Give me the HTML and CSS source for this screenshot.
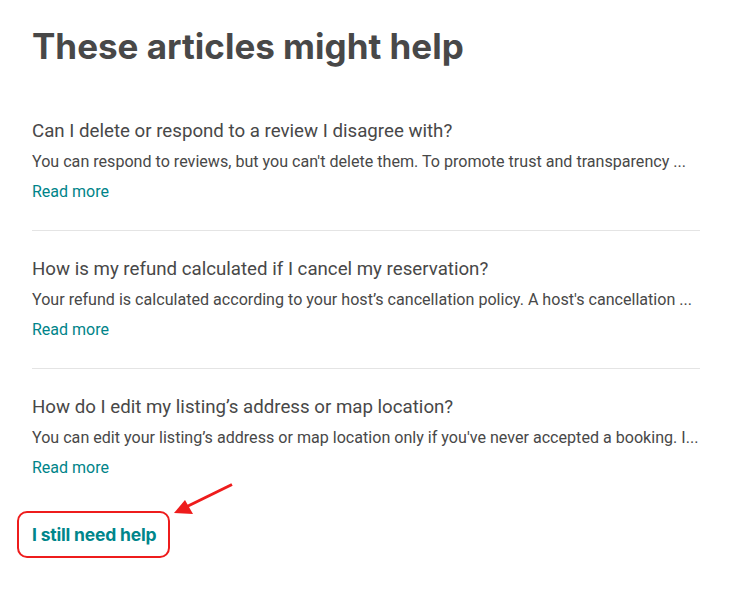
FILE: index.html
```html
<!DOCTYPE html>
<html>
<head>
<meta charset="utf-8">
<link rel="stylesheet" href="styles.css">
</head>
<body>
<main class="page">
  <h1 class="heading">These articles might help</h1>
  <section class="articles">
    <article class="article">
      <h2 class="article-title">Can I delete or respond to a review I disagree with?</h2>
      <p class="article-desc">You can respond to reviews, but you can't delete them. To promote trust and transparency ...</p>
      <a class="read-more" href="#">Read more</a>
    </article>
    <article class="article">
      <h2 class="article-title">How is my refund calculated if I cancel my reservation?</h2>
      <p class="article-desc">Your refund is calculated according to your host’s cancellation policy. A host's cancellation ...</p>
      <a class="read-more" href="#">Read more</a>
    </article>
    <article class="article">
      <h2 class="article-title">How do I edit my listing’s address or map location?</h2>
      <p class="article-desc">You can edit your listing’s address or map location only if you've never accepted a booking. I...</p>
      <a class="read-more" href="#">Read more</a>
    </article>
  </section>
  <div class="help-row">
    <a class="help-btn" href="#">I still need help</a>
    <svg class="arrow" width="64" height="34" viewBox="0 0 64 34">
      <line x1="60" y1="1.5" x2="14" y2="24" stroke="#ee1c1c" stroke-width="3"/>
      <polygon points="2,30 13,17 21,31" fill="#ee1c1c"/>
    </svg>
  </div>
</main>
</body>
</html>
```

FILE: styles.css
```css
html, body {
  margin: 0;
  background: #ffffff;
}
body {
  font-family: "Roboto", "Liberation Sans", sans-serif;
  color: #484848;
}
.page {
  width: 668px;
  padding: 24px 0 0 32px;
}
.heading {
  margin: 0 0 37px 0;
  font-family: "Inter", "Roboto", sans-serif;
  font-size: 35px;
  font-weight: 700;
  line-height: 44px;
  letter-spacing: 0;
  color: #484848;
}
.article {
  padding: 14px 0 26px;
  border-bottom: 1px solid #e4e4e4;
  margin-bottom: 12px;
}
.article:last-child {
  border-bottom: none;
  margin-bottom: 0;
}
.article-title {
  margin: 0 0 7px 0;
  font-size: 18.7px;
  font-weight: 400;
  line-height: 24px;
  color: #484848;
}
.article-desc {
  margin: 0 0 6px 0;
  font-size: 16.1px;
  line-height: 24px;
  white-space: nowrap;
  color: #484848;
}
.read-more {
  display: inline-block;
  font-size: 16px;
  line-height: 24px;
  color: #008489;
  text-decoration: none;
}
.help-row {
  position: relative;
  margin-left: -15px;
  margin-top: 5px;
}
.help-btn {
  display: inline-block;
  padding: 11px 12px 11px 13px;
  border: 2px solid #ee1c1c;
  border-radius: 10px;
  font-family: "Inter", "Roboto", sans-serif;
  font-size: 17.5px;
  font-weight: 700;
  line-height: 21px;
  letter-spacing: -0.2px;
  color: #00868b;
  text-decoration: none;
}
.arrow {
  position: absolute;
  left: 155px;
  top: -28px;
}
```
